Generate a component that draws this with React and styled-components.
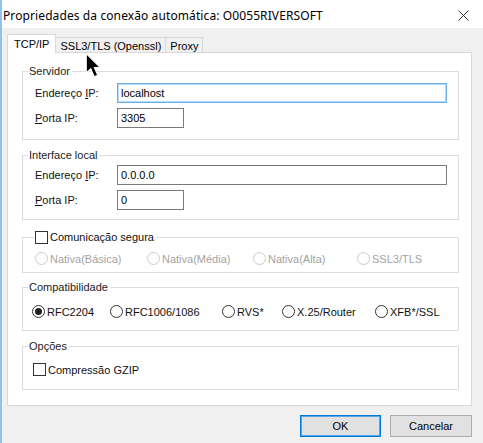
import React from "react";
import styled, { createGlobalStyle } from "styled-components";

const GlobalStyle = createGlobalStyle`
  html, body {
    margin: 0;
    padding: 0;
    background: #f0f0f0;
  }
  * {
    box-sizing: border-box;
  }
`;

const Window = styled.div`
  position: relative;
  width: 483px;
  height: 443px;
  overflow: hidden;
  display: flex;
  flex-direction: column;
  background: #f0f0f0;
  border-left: 2px solid #8fc2ec;
  font-family: "Liberation Sans", Arial, sans-serif;
  font-size: 11px;
  color: #111;
`;

const TitleBar = styled.div`
  height: 28px;
  flex: none;
  display: flex;
  align-items: center;
  justify-content: space-between;
  background: #fff;
  padding: 2px 14px 0 1px;
  span {
    font-family: "Noto Sans", "Liberation Sans", sans-serif;
    font-size: 12px;
    letter-spacing: 0.1px;
    color: #000;
  }
`;

const Body = styled.div`
  flex: 1;
  display: flex;
  flex-direction: column;
  padding: 6px 11px 0 5px;
`;

const TabStrip = styled.div`
  display: flex;
  align-items: flex-end;
  position: relative;
  z-index: 1;
  margin-bottom: -1px;
  height: 19px;
`;

const Tab = styled.div`
  display: flex;
  align-items: center;
  height: ${(p) => (p.$active ? "19px" : "16px")};
  padding: ${(p) => (p.$active ? "0 6px 0 6px" : "1px 4px 0 4px")};
  background: ${(p) => (p.$active ? "#fff" : "#f0f0f0")};
  border: 1px solid #d9d9d9;
  border-bottom: ${(p) => (p.$active ? "none" : "1px solid #d9d9d9")};
  margin-left: ${(p) => (p.$first ? "0" : "-1px")};
  color: #000;
`;

const Panel = styled.div`
  height: 354px;
  background: #fff;
  border: 1px solid #d9d9d9;
  padding: 0 12px 0 14px;
  display: flex;
  flex-direction: column;
`;

const Group = styled.fieldset`
  margin: ${(p) => p.$mt}px 0 0 0;
  padding: ${(p) => p.$pt}px 10px ${(p) => p.$pb}px 12px;
  border: 1px solid #dcdcdc;
  min-width: 0;
`;

const Legend = styled.legend`
  display: flex;
  align-items: center;
  height: 13px;
  line-height: 13px;
  padding: 0 2px 0 1px;
  margin-left: ${(p) => p.$ml ?? -7}px;
  color: #222;
`;

const FieldRow = styled.div`
  display: flex;
  align-items: center;
  height: 20px;
  & + & {
    margin-top: 5px;
  }
`;

const FieldLabel = styled.label`
  width: 82px;
  flex: none;
  color: #111;
  u {
    text-decoration: underline;
  }
`;

const TextInput = styled.div`
  height: 20px;
  width: ${(p) => p.$w}px;
  border: 1px solid ${(p) => (p.$focus ? "#6aaeea" : "#7a7a7a")};
  ${(p) => p.$focus && "box-shadow: inset 0 0 0 1px #b9d9f5;"}
  padding: 0 3px;
  display: flex;
  align-items: center;
  color: #000;
  background: #fff;
`;

const OptionRow = styled.div`
  display: grid;
  grid-template-columns: ${(p) => p.$cols};
  align-items: center;
  height: 13px;
  margin-left: ${(p) => p.$ml ?? 0}px;
`;

const Option = styled.div`
  display: flex;
  align-items: center;
  gap: ${(p) => p.$gap ?? 2}px;
  margin-left: ${(p) => p.$ml ?? 0}px;
  color: ${(p) => (p.$disabled ? "#a3a3a3" : "#111")};
  white-space: nowrap;
`;

const Radio = styled.span`
  width: 13px;
  height: 13px;
  flex: none;
  border-radius: 50%;
  border: 1px solid ${(p) => (p.$disabled ? "#cccccc" : "#333")};
  background: #fff;
  display: flex;
  align-items: center;
  justify-content: center;
  &::after {
    content: "";
    display: ${(p) => (p.$checked ? "block" : "none")};
    width: 7px;
    height: 7px;
    border-radius: 50%;
    background: #222;
  }
`;

const Check = styled.span`
  width: 13px;
  height: 13px;
  flex: none;
  border: 1px solid #333;
  background: #fff;
`;

const Footer = styled.div`
  display: flex;
  justify-content: flex-end;
  gap: 9px;
  margin-top: 9px;
`;

const Button = styled.div`
  width: ${(p) => p.$w}px;
  height: 22px;
  display: flex;
  align-items: center;
  justify-content: center;
  background: #e1e1e1;
  border: 1px solid ${(p) => (p.$default ? "#0078d7" : "#adadad")};
  ${(p) => p.$default && "box-shadow: inset 0 0 0 1px #5aa5e6;"}
  color: #000;
`;

const Cursor = styled.svg`
  position: absolute;
  left: 83px;
  top: 52px;
`;

function RadioOption({ label, checked, disabled, gap }) {
  return (
    <Option $disabled={disabled} $gap={gap}>
      <Radio $checked={checked} $disabled={disabled} />
      {label}
    </Option>
  );
}

export default function App() {
  const secure = ["Nativa(Básica)", "Nativa(Média)", "Nativa(Alta)", "SSL3/TLS"];
  const compat = ["RFC2204", "RFC1006/1086", "RVS*", "X.25/Router", "XFB*/SSL"];

  return (
    <>
      <GlobalStyle />
      <Window>
        <TitleBar>
          <span>Propriedades da conexão automática: O0055RIVERSOFT</span>
          <svg width="11" height="11" viewBox="0 0 11 11">
            <path d="M0.5 0.5 L10.5 10.5 M10.5 0.5 L0.5 10.5" stroke="#333" strokeWidth="1" />
          </svg>
        </TitleBar>
        <Body>
          <TabStrip>
            <Tab $active $first>TCP/IP</Tab>
            <Tab>SSL3/TLS (Openssl)</Tab>
            <Tab>Proxy</Tab>
          </TabStrip>
          <Panel>
            <Group $mt={12} $pt={5} $pb={11}>
              <Legend>Servidor</Legend>
              <FieldRow>
                <FieldLabel>
                  Endereço <u>I</u>P:
                </FieldLabel>
                <TextInput $w={330} $focus>localhost</TextInput>
              </FieldRow>
              <FieldRow>
                <FieldLabel>
                  <u>P</u>orta IP:
                </FieldLabel>
                <TextInput $w={67}>3305</TextInput>
              </FieldRow>
            </Group>

            <Group $mt={9} $pt={3} $pb={9}>
              <Legend>Interface local</Legend>
              <FieldRow>
                <FieldLabel>
                  Endereço <u>I</u>P:
                </FieldLabel>
                <TextInput $w={330}>0.0.0.0</TextInput>
              </FieldRow>
              <FieldRow>
                <FieldLabel>
                  <u>P</u>orta IP:
                </FieldLabel>
                <TextInput $w={67}>0</TextInput>
              </FieldRow>
            </Group>

            <Group $mt={11} $pt={8} $pb={7}>
              <Legend $ml={-1}>
                <Option $gap={2}>
                  <Check />
                  Comunicação segura
                </Option>
              </Legend>
              <OptionRow $cols="112px 106px 104px 1fr">
                {secure.map((s) => (
                  <RadioOption key={s} label={s} disabled />
                ))}
              </OptionRow>
            </Group>

            <Group $mt={8} $pt={11} $pb={12}>
              <Legend>Compatibilidade</Legend>
              <OptionRow $cols="78px 112px 60px 93px 1fr" $ml={-3}>
                {compat.map((s, i) => (
                  <RadioOption key={s} label={s} checked={i === 0} />
                ))}
              </OptionRow>
            </Group>

            <Group $mt={9} $pt={10} $pb={13}>
              <Legend>Opções</Legend>
              <Option $ml={-2}>
                <Check />
                Compressão GZIP
              </Option>
            </Group>
          </Panel>
          <Footer>
            <Button $w={81} $default>OK</Button>
            <Button $w={82}>Cancelar</Button>
          </Footer>
        </Body>
        <Cursor width="20" height="28" viewBox="0 0 16 22">
          <path
            d="M1 1 L1 16.5 L4.6 13.2 L7.4 19.6 L10.2 18.4 L7.5 12.2 L12.2 12.2 Z"
            fill="#000"
            stroke="#fff"
            strokeWidth="0.9"
            strokeLinejoin="miter"
          />
        </Cursor>
      </Window>
    </>
  );
}
